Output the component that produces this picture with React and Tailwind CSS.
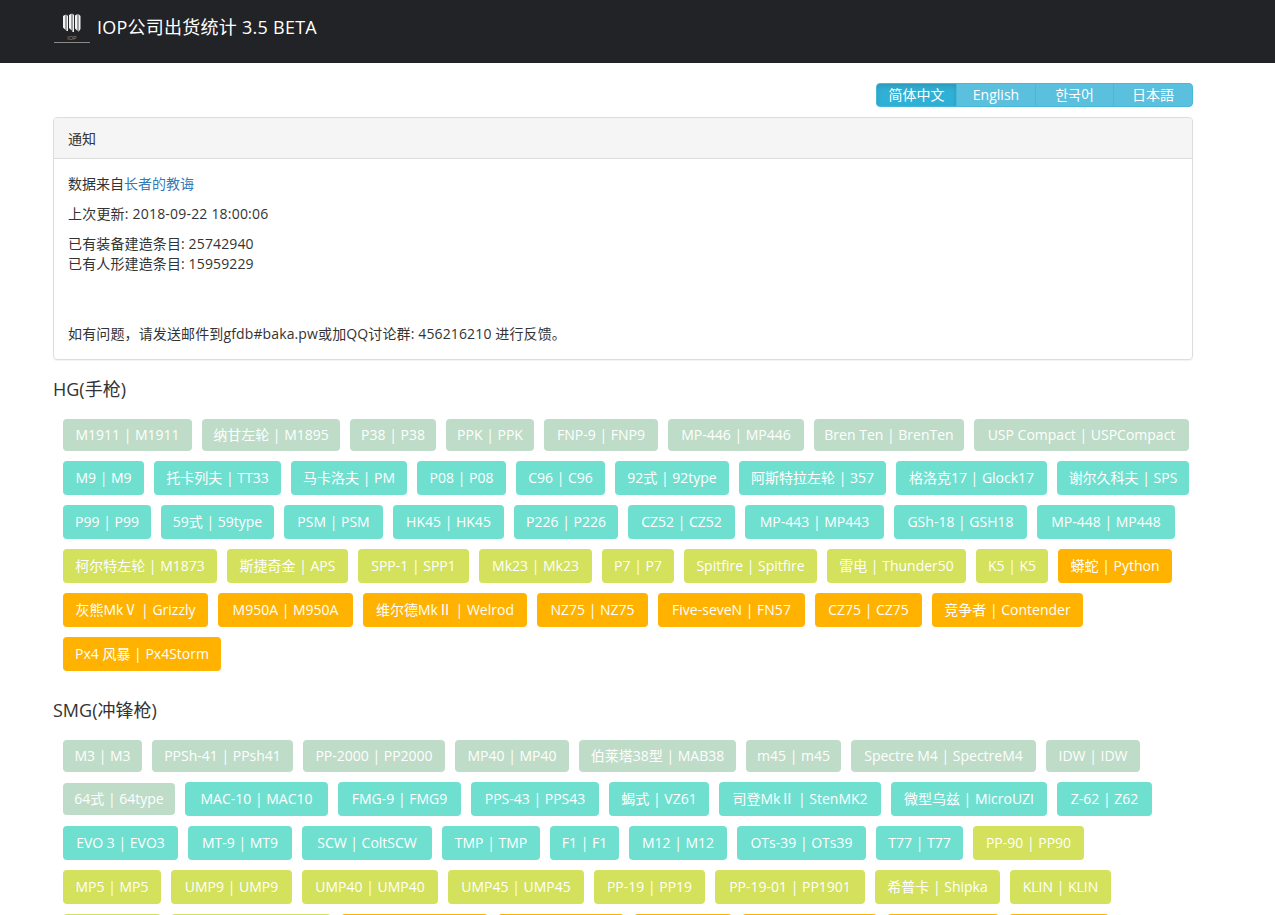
const F = '"Open Sans","Noto Sans CJK SC",sans-serif';
const G = ['bg-[#bedcc8] h-[32px] leading-[32px]', 'bg-[#6fdfd0] h-[34px] leading-[34px]', 'bg-[#d3e15d] h-[34px] leading-[34px]', 'bg-[#ffb200] h-[34px] leading-[34px]'];
const hg = [
  [0, [['M1911 | M1911', 129], ['纳甘左轮 | M1895', 138], ['P38 | P38', 86], ['PPK | PPK', 88], ['FNP-9 | FNP9', 114], ['MP-446 | MP446', 136], ['Bren Ten | BrenTen', 150], ['USP Compact | USPCompact', 215]]],
  [1, [['M9 | M9', 81], ['托卡列夫 | TT33', 127], ['马卡洛夫 | PM', 116], ['P08 | P08', 89], ['C96 | C96', 89], ['92式 | 92type', 114], ['阿斯特拉左轮 | 357', 147], ['格洛克17 | Glock17', 151], ['谢尔久科夫 | SPS', 132], ['P99 | P99', 88], ['59式 | 59type', 113], ['PSM | PSM', 99], ['HK45 | HK45', 111], ['P226 | P226', 104], ['CZ52 | CZ52', 107], ['MP-443 | MP443', 139], ['GSh-18 | GSH18', 133], ['MP-448 | MP448', 138]]],
  [2, [['柯尔特左轮 | M1873', 154], ['斯捷奇金 | APS', 121], ['SPP-1 | SPP1', 111], ['Mk23 | Mk23', 113], ['P7 | P7', 72], ['Spitfire | Spitfire', 133], ['雷电 | Thunder50', 139], ['K5 | K5', 72]]],
  [3, [['蟒蛇 | Python', 114], ['灰熊MkⅤ | Grizzly', 145], ['M950A | M950A', 135], ['维尔德MkⅡ | Welrod', 164], ['NZ75 | NZ75', 111], ['Five-seveN | FN57', 147], ['CZ75 | CZ75', 107], ['竞争者 | Contender', 151], ['Px4 风暴 | Px4Storm', 158]]],
];
const smg = [
  [0, [['M3 | M3', 79], ['PPSh-41 | PPsh41', 141], ['PP-2000 | PP2000', 142], ['MP40 | MP40', 114], ['伯莱塔38型 | MAB38', 157], ['m45 | m45', 95], ['Spectre M4 | SpectreM4', 185], ['IDW | IDW', 94], ['64式 | 64type', 112]]],
  [1, [['MAC-10 | MAC10', 143], ['FMG-9 | FMG9', 123], ['PPS-43 | PPS43', 128], ['蝎式 | VZ61', 100], ['司登MkⅡ | StenMK2', 162], ['微型乌兹 | MicroUZI', 156], ['Z-62 | Z62', 95], ['EVO 3 | EVO3', 115], ['MT-9 | MT9', 104], ['SCW | ColtSCW', 130], ['TMP | TMP', 98], ['F1 | F1', 69], ['M12 | M12', 98], ['OTs-39 | OTs39', 129], ['T77 | T77', 87]]],
  [2, [['PP-90 | PP90', 111], ['MP5 | MP5', 98], ['UMP9 | UMP9', 121], ['UMP40 | UMP40', 136], ['UMP45 | UMP45', 136], ['PP-19 | PP19', 111], ['PP-19-01 | PP1901', 150], ['希普卡 | Shipka', 125], ['KLIN | KLIN', 101], ['FN-P90 | P90', 98], ['Honey Badger | HB', 160]]],
  [3, [['汤姆森 | Thompson', 147], ['Vector | Vector', 126], ['PPS | PPS', 98], ['索米 | Suomi', 135], ['G36C | G36C', 112], ['C-MS | CMS', 100]]],
];
function Group({ data }) {
  return (
    <div className="flex flex-wrap items-center pl-[10px] pr-[3px] gap-x-[10px] gap-y-[10px]">
      {data.flatMap(([r, items]) => items.map(([t, w]) => (
        <span key={t} style={{ width: w }} className={`${G[r]} rounded-[4px] text-center text-white text-[14px] whitespace-nowrap`}>{t}</span>
      )))}
    </div>
  );
}
export default function App() {
  return (
    <div className="h-[915px] overflow-hidden bg-white text-[#333] text-[14px]" style={{ fontFamily: F }}>
      <header className="h-[63px] bg-[#222326] flex pl-[53px]">
        <svg width="38" height="36" viewBox="0 0 38 36" className="mr-[6px] mt-[10px]">
          <g fill="#f2f2f2">
            <path d="M10 6l2.600-1.500v15.500l-2.600-2.500z" /><path d="M13.400 4.500l1.600 1.500v15h-1.600z" />
            <path d="M16 5l2.600-1.500v17l-2.600-2.500z" /><path d="M19.400 3.500l1.600 1.500v17h-1.600z" />
            <path d="M22 5.500l2.600-1.500v17l-2.600-2.500z" /><path d="M25.400 4l2.100 2v13l-2.100 3z" />
          </g>
          <text x="19" y="29.500" fontSize="5.500" textAnchor="middle" fill="#8a8a8a" fontFamily="Liberation Sans">IOP</text>
          <rect x="1" y="32" width="36" height="1" fill="#8a8a8a" />
        </svg>
        <span className="text-white text-[18px] tracking-[0.25px] leading-[24px] mt-[15px]">IOP公司出货统计 3.5 BETA</span>
      </header>
      <div className="w-[1140px] ml-[53px]">
        <div className="flex justify-end mt-[20px] mb-[10px]">
          <div className="flex h-[24px] rounded-[4px] overflow-hidden bg-[#5bc0de] text-white text-[14px] leading-[21px] border border-[#46b8da]">
            <span className="w-[79px] text-center bg-[#31b0d5] shadow-[inset_0_3px_5px_rgba(0,0,0,.125)]">简体中文</span>
            <span className="w-[79px] text-center border-l border-[#46b8da]">English</span>
            <span className="w-[78px] text-center border-l border-[#46b8da]" style={{ fontFamily: '"Open Sans","Noto Sans CJK KR",sans-serif' }}>한국어</span>
            <span className="w-[79px] text-center border-l border-[#46b8da]" style={{ fontFamily: '"Open Sans","Noto Sans CJK JP",sans-serif' }}>日本語</span>
          </div>
        </div>
        <section className="border border-[#ddd] rounded-[4px] shadow-[0_1px_1px_rgba(0,0,0,.05)] text-[14px]">
          <div className="h-[41px] bg-[#f5f5f5] border-b border-[#ddd] px-[14px] flex items-center rounded-t-[3px]">通知</div>
          <div className="pl-[14px] pr-[15px] py-[15px] leading-[20px]">
            <p className="mb-[10px]">数据来自<a className="text-[#337ab7]">长者的教诲</a></p>
            <p className="mb-[10px] tracking-[0.2px]">上次更新: 2018-09-22 18:00:06</p>
            <p className="mb-[50px] tracking-[0.13px]">已有装备建造条目: 25742940<br />已有人形建造条目: 15959229</p>
            <p className="tracking-[0.13px]">如有问题，请发送邮件到gfdb#baka.pw或加QQ讨论群: 456216210 进行反馈。</p>
          </div>
        </section>
        <h2 className="text-[18px] leading-[20px] mt-[19px] mb-[20px]">HG(手枪)</h2>
        <Group data={hg} />
        <h2 className="text-[18px] leading-[20px] mt-[29px] mb-[20px]">SMG(冲锋枪)</h2>
        <Group data={smg} />
      </div>
    </div>
  );
}
